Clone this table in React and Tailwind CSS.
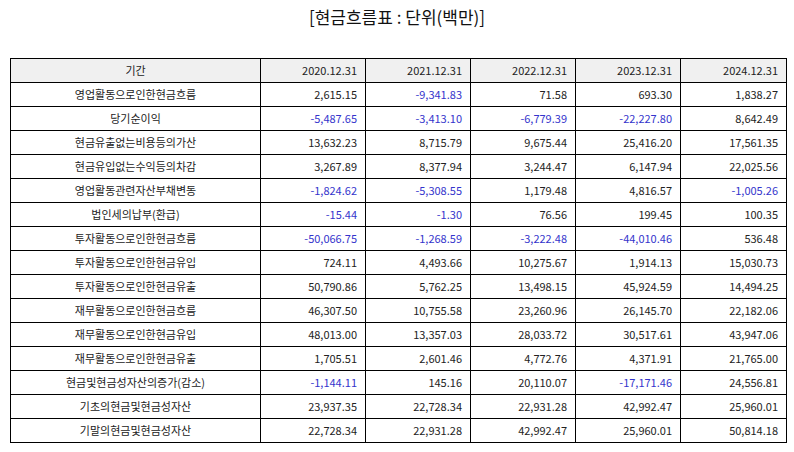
import React from "react";

const years = ["2020.12.31", "2021.12.31", "2022.12.31", "2023.12.31", "2024.12.31"];

const rows = [
  ["영업활동으로인한현금흐름", ["2,615.15", "-9,341.83", "71.58", "693.30", "1,838.27"]],
  ["당기순이익", ["-5,487.65", "-3,413.10", "-6,779.39", "-22,227.80", "8,642.49"]],
  ["현금유출없는비용등의가산", ["13,632.23", "8,715.79", "9,675.44", "25,416.20", "17,561.35"]],
  ["현금유입없는수익등의차감", ["3,267.89", "8,377.94", "3,244.47", "6,147.94", "22,025.56"]],
  ["영업활동관련자산부채변동", ["-1,824.62", "-5,308.55", "1,179.48", "4,816.57", "-1,005.26"]],
  ["법인세의납부(환급)", ["-15.44", "-1.30", "76.56", "199.45", "100.35"]],
  ["투자활동으로인한현금흐름", ["-50,066.75", "-1,268.59", "-3,222.48", "-44,010.46", "536.48"]],
  ["투자활동으로인한현금유입", ["724.11", "4,493.66", "10,275.67", "1,914.13", "15,030.73"]],
  ["투자활동으로인한현금유출", ["50,790.86", "5,762.25", "13,498.15", "45,924.59", "14,494.25"]],
  ["재무활동으로인한현금흐름", ["46,307.50", "10,755.58", "23,260.96", "26,145.70", "22,182.06"]],
  ["재무활동으로인한현금유입", ["48,013.00", "13,357.03", "28,033.72", "30,517.61", "43,947.06"]],
  ["재무활동으로인한현금유출", ["1,705.51", "2,601.46", "4,772.76", "4,371.91", "21,765.00"]],
  ["현금및현금성자산의증가(감소)", ["-1,144.11", "145.16", "20,110.07", "-17,171.46", "24,556.81"]],
  ["기초의현금및현금성자산", ["23,937.35", "22,728.34", "22,931.28", "42,992.47", "25,960.01"]],
  ["기말의현금및현금성자산", ["22,728.34", "22,931.28", "42,992.47", "25,960.01", "50,814.18"]],
];

const App = () => {
  return (
    <div className="w-[794px] h-[452px] bg-white px-[10px] font-['Noto_Sans_CJK_KR','Noto_Sans',sans-serif] text-[#222]">
      <div className="h-[58px] pt-[5px] text-center text-[17px] leading-[24px] text-[#111]">
        [현금흐름표 : 단위(백만)]
      </div>
      <table className="w-[776px] table-fixed border-collapse text-[11px]">
        <colgroup>
          <col className="w-[250px]" />
          <col className="w-[105px]" />
          <col className="w-[105px]" />
          <col className="w-[105px]" />
          <col className="w-[105px]" />
          <col className="w-[106px]" />
        </colgroup>
        <thead>
          <tr className="h-[24px] bg-[#f0f0f0]">
            <th className="border border-black font-normal text-center">기간</th>
            {years.map((y) => (
              <th key={y} className="border border-black font-normal text-right pr-[8px]">
                {y}
              </th>
            ))}
          </tr>
        </thead>
        <tbody>
          {rows.map(([label, vals]) => (
            <tr key={label} className="h-[24px]">
              <td className="border border-black text-center">{label}</td>
              {vals.map((v, i) => (
                <td
                  key={i}
                  className={
                    v.startsWith("-")
                      ? "border border-black text-right pr-[8px] text-[#3434cc]"
                      : "border border-black text-right pr-[8px]"
                  }
                >
                  {v}
                </td>
              ))}
            </tr>
          ))}
        </tbody>
      </table>
    </div>
  );
};

export default App;
